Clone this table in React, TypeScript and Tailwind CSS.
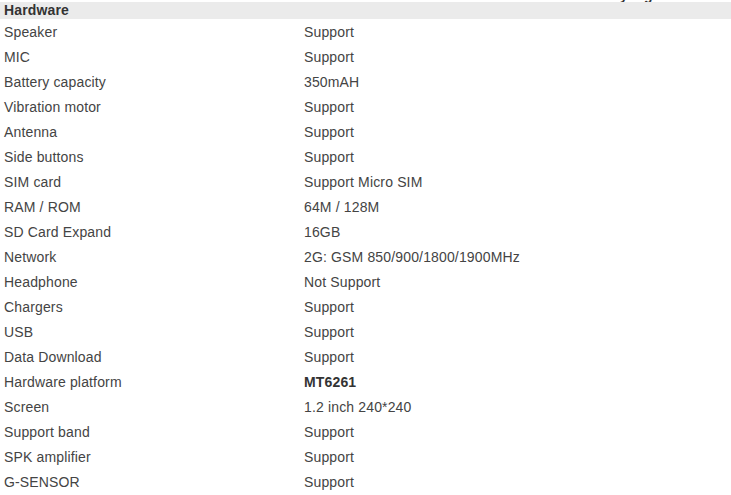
import React from "react";

const rows: [string, string, boolean?][] = [
  ["Speaker", "Support"],
  ["MIC", "Support"],
  ["Battery capacity", "350mAH"],
  ["Vibration motor", "Support"],
  ["Antenna", "Support"],
  ["Side buttons", "Support"],
  ["SIM card", "Support Micro SIM"],
  ["RAM / ROM", "64M / 128M"],
  ["SD Card Expand", "16GB"],
  ["Network", "2G: GSM 850/900/1800/1900MHz"],
  ["Headphone", "Not Support"],
  ["Chargers", "Support"],
  ["USB", "Support"],
  ["Data Download", "Support"],
  ["Hardware platform", "MT6261", true],
  ["Screen", "1.2 inch 240*240"],
  ["Support band", "Support"],
  ["SPK amplifier", "Support"],
  ["G-SENSOR", "Support"],
];

export default function App() {
  return (
    <div
      className="w-[731px] h-[495px] overflow-hidden bg-white text-[14px] text-[#444] tracking-[0.15px]"
      style={{ fontFamily: '"Liberation Sans", Arial, sans-serif' }}
    >
      <div className="h-[2px] overflow-hidden">
        <div className="-mt-[12px] pl-[612px] text-[14px] leading-[14px] text-[#333] font-bold whitespace-pre">
          {"ay    g"}
        </div>
      </div>
      <div className="h-[17px] bg-[#ebebeb] pl-[4px] font-bold text-[#333] leading-[17px]">
        Hardware
      </div>
      {rows.map(([k, v, b]) => (
        <div key={k} className="flex h-[25px] items-center leading-[16px]">
          <div className="w-[304px] pl-[4px]">{k}</div>
          <div className={b ? "font-bold text-[#333]" : ""}>{v}</div>
        </div>
      ))}
    </div>
  );
}
